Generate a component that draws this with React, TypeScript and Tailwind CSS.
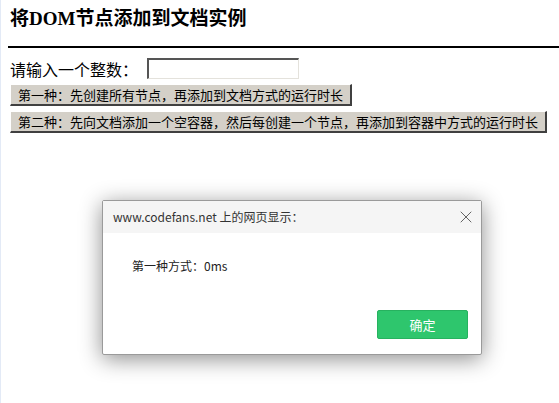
import { X } from "lucide-react";

const CJK = "font-['Noto_Sans_CJK_SC','Noto_Sans',sans-serif]";

function ClassicButton({ children }: { children: React.ReactNode }) {
  return (
    <button
      type="button"
      className={`h-[22px] self-start border-t border-l border-t-white border-l-white border-r-2 border-b-2 border-r-[#404040] border-b-[#404040] bg-[#d4d0c8] px-[7px] text-[13px] leading-[18px] text-black ${CJK}`}
    >
      {children}
    </button>
  );
}

export default function App() {
  return (
    <div className="relative h-[403px] w-[559px] overflow-hidden border-l border-[#e3eaf6] bg-white">
      <div className="flex flex-col pl-[7px]">
        <h3
          className={`mt-[6px] pl-[2px] text-[19px] font-bold leading-[26px] text-black font-['Liberation_Serif','Noto_Sans_CJK_SC',serif]`}
        >
          将DOM节点添加到文档实例
        </h3>
        <div className="mt-[14px] h-[2px] bg-black" />
        <div className="mt-[10px] flex items-center pl-[2px]">
          <span className={`text-[16px] leading-[20px] text-black ${CJK}`}>请输入一个整数：</span>
          <input
            type="text"
            className="ml-[9px] h-[21px] w-[152px] border-t-2 border-l-2 border-t-[#555] border-l-[#555] border-r border-b border-r-[#e4e2dc] border-b-[#e4e2dc] bg-white outline-none"
          />
        </div>
        <div className="mt-[5px] flex flex-col gap-[5px] pl-[2px]">
          <ClassicButton>第一种：先创建所有节点，再添加到文档方式的运行时长</ClassicButton>
          <ClassicButton>第二种：先向文档添加一个空容器，然后每创建一个节点，再添加到容器中方式的运行时长</ClassicButton>
        </div>
      </div>

      {/* alert dialog */}
      <div className="absolute left-[101px] top-[200px] flex h-[155px] w-[380px] flex-col rounded-[2px] border border-[#9a9a9a] bg-white shadow-[0_4px_22px_rgba(0,0,0,0.45)]">
        <div className="flex h-[32px] items-center justify-between bg-[#f5f5f5] pl-[10px] pr-[5px]">
          <span className={`text-[12px] text-[#333] ${CJK}`}>www.codefans.net 上的网页显示：</span>
          <X className="h-[20px] w-[20px] text-[#555]" strokeWidth={1.1} />
        </div>
        <div className={`pl-[29px] pt-[25px] text-[12px] leading-[16px] text-[#222] ${CJK}`}>第一种方式：0ms</div>
        <div className="mt-auto flex justify-end pb-[15px] pr-[13px]">
          <button
            type="button"
            className={`h-[29px] w-[91px] rounded-[2px] border border-[#27b25f] bg-[#2ec66d] text-[13px] text-white ${CJK}`}
          >
            确定
          </button>
        </div>
      </div>
    </div>
  );
}
